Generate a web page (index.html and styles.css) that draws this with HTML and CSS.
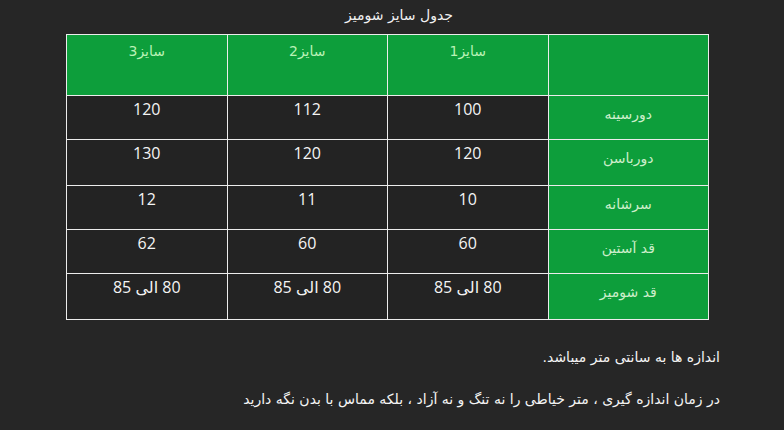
FILE: index.html
```html
<!DOCTYPE html>
<html lang="fa" dir="rtl">
<head>
<meta charset="utf-8">
<title>جدول سایز شومیز</title>
<link rel="stylesheet" href="styles.css">
</head>
<body>
<div class="page">
  <div class="title">جدول سایز شومیز</div>
  <table class="sizes">
    <tr class="head">
      <th class="corner"></th>
      <th>سایز1</th>
      <th>سایز2</th>
      <th>سایز3</th>
    </tr>
    <tr class="r44">
      <td class="label">دورسینه</td>
      <td>100</td><td>112</td><td>120</td>
    </tr>
    <tr class="r46">
      <td class="label">دورباسن</td>
      <td>120</td><td>120</td><td>130</td>
    </tr>
    <tr class="r44">
      <td class="label">سرشانه</td>
      <td>10</td><td>11</td><td>12</td>
    </tr>
    <tr class="r44">
      <td class="label">قد آستین</td>
      <td>60</td><td>60</td><td>62</td>
    </tr>
    <tr class="r46">
      <td class="label">قد شومیز</td>
      <td>80 الی 85</td><td>80 الی 85</td><td>80 الی 85</td>
    </tr>
  </table>
  <div class="notes">
    <p class="note1">اندازه ها به سانتی متر میباشد.</p>
    <p class="note2">در زمان اندازه گیری ، متر خیاطی را نه تنگ و نه آزاد ، بلکه مماس با بدن نگه دارید</p>
  </div>
</div>
</body>
</html>
```
FILE: styles.css
```css
html, body {
  margin: 0;
  padding: 0;
  background: #262626;
}
.page {
  width: 784px;
  height: 430px;
  overflow: hidden;
  font-family: "Open Sans", "DejaVu Sans", sans-serif;
  color: #ffffff;
}
.title {
  height: 34px;
  line-height: 31px;
  font-size: 14px;
  text-align: center;
  padding-left: 14px;
  color: #f2f2f2;
  font-family: "DejaVu Sans", sans-serif;
}
.sizes {
  border-collapse: collapse;
  margin-right: 75px;
  width: 643px;
  table-layout: fixed;
}
.sizes th, .sizes td {
  border: 1px solid #ececec;
  padding: 0;
  text-align: center;
  vertical-align: top;
  font-size: 16px;
  line-height: 22px;
}
.sizes th {
  background: #0d9e3b;
  color: #b9f2b6;
  font-weight: normal;
  font-family: "DejaVu Sans", sans-serif;
  font-size: 14px;
  padding-top: 5px;
}
.head { height: 61px; }
.r44 { height: 44px; }
.r46 { height: 46px; }
.sizes td {
  background: #232323;
  padding-top: 2px;
  color: #f4f4f4;
}
.sizes td.label {
  background: #0d9e3b;
  color: #cdeecb;
  font-family: "DejaVu Sans", sans-serif;
  font-size: 14px;
  padding-top: 7px;
}
.notes {
  padding-right: 64px;
  padding-top: 26px;
  font-family: "DejaVu Sans", sans-serif;
  font-size: 14px;
  color: #f4f4f4;
}
.notes p {
  margin: 0;
  line-height: 22px;
}
.note2 {
  margin-top: 20px !important;
}
```
